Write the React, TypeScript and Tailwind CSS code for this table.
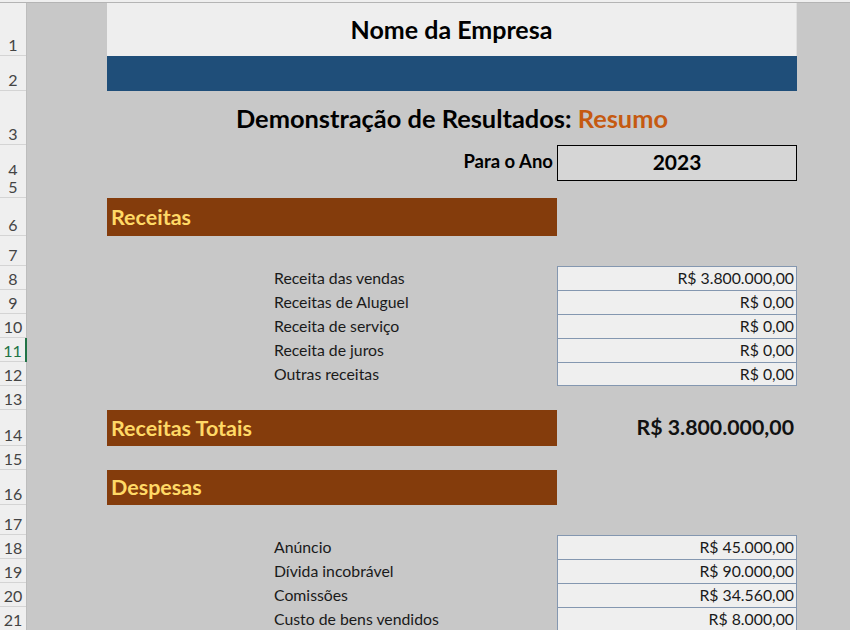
import React from "react"

const font = { fontFamily: "Lato, 'Open Sans', sans-serif" }

type RowProps = {
    n: number
    h: string
    active?: boolean
    children?: React.ReactNode
}

// one spreadsheet row: row header + cells
function Row({ n, h, active, children }: RowProps) {
    return (
        <div className={`grid grid-cols-[27px_80px_163px_287px_240px_1fr] ${h}`}>
            <div
                className={`flex items-end justify-center pb-[3px] bg-[#efefef] shadow-[inset_0_-1px_0_#d4d4d4] text-[16px] leading-none ${
                    active ? "text-[#217346] border-r-2 border-r-[#217346]" : "text-[#444] border-r border-r-[#bdbdbd]"
                }`}
            >
                {n}
            </div>
            {children}
        </div>
    )
}

const receitas = [
    ["Receita das vendas", "R$ 3.800.000,00"],
    ["Receitas de Aluguel", "R$ 0,00"],
    ["Receita de serviço", "R$ 0,00"],
    ["Receita de juros", "R$ 0,00"],
    ["Outras receitas", "R$ 0,00"],
]

const despesas = [
    ["Anúncio", "R$ 45.000,00"],
    ["Dívida incobrável", "R$ 90.000,00"],
    ["Comissões", "R$ 34.560,00"],
    ["Custo de bens vendidos", "R$ 8.000,00"],
]

function ItemRow({ n, label, value, last }: { n: number; label: string; value: string; last?: boolean }) {
    return (
        <Row n={n} h="h-[24px]" active={n === 11}>
            <div />
            <div />
            <div className="flex items-center pl-[4px] text-[15.8px] leading-none text-[#1a1a1a]">{label}</div>
            <div
                className={`flex items-center justify-end pr-[3px] bg-[#efefef] text-[15.8px] leading-none text-[#1a1a1a] ${
                    last
                        ? "shadow-[inset_1px_1px_0_#8497b0,inset_-1px_-1px_0_#8497b0]"
                        : "shadow-[inset_1px_1px_0_#8497b0,inset_-1px_0_0_#8497b0]"
                }`}
            >
                {value}
            </div>
            <div />
        </Row>
    )
}

function SectionBar({ n, h, title }: { n: number; h: string; title: string }) {
    return (
        <Row n={n} h={h}>
            <div />
            <div className="col-span-2 flex items-center pl-[4px] bg-[#843c0c] text-[#ffd966] text-[21.5px] font-bold">
                {title}
            </div>
            <div />
            <div />
        </Row>
    )
}

export default function App() {
    return (
        <div className="w-[850px] h-[630px] overflow-hidden bg-[#c8c8c8]" style={font}>
            <div className="h-[3px] bg-[#efefef] border-b border-[#b4b4b4]" />

            <Row n={1} h="h-[53px]">
                <div />
                <div className="col-span-3 flex items-center justify-center bg-[#eeeeee] border-r border-[#e0e0e0] text-[25px] font-bold text-black">
                    Nome da Empresa
                </div>
                <div />
            </Row>
            <Row n={2} h="h-[35px]">
                <div />
                <div className="col-span-3 bg-[#1f4e79]" />
                <div />
            </Row>
            <Row n={3} h="h-[54px]">
                <div />
                <div className="col-span-3 flex items-center justify-center text-[25.4px] font-bold text-black">
                    Demonstração de Resultados:&nbsp;<span className="text-[#c55a11]">Resumo</span>
                </div>
                <div />
            </Row>
            <Row n={4} h="h-[30px]">
                <div />
                <div className="col-span-2 flex items-center justify-end pr-[4px] pb-[2px] text-[18.5px] font-bold text-black">
                    Para o Ano
                </div>
                <div className="flex items-center justify-center pb-[2px] bg-[#d6d6d6] border border-black text-[21px] font-bold text-black">
                    2023
                </div>
                <div />
            </Row>
            <Row n={5} h="h-[23px]" />
            <SectionBar n={6} h="h-[38px]" title="Receitas" />
            <Row n={7} h="h-[30px]" />
            {receitas.map(([label, value], i) => (
                <ItemRow key={label} n={8 + i} label={label} value={value} last={i === 4} />
            ))}
            <Row n={13} h="h-[24px]" />
            <Row n={14} h="h-[36px]">
                <div />
                <div className="col-span-2 flex items-center pl-[4px] bg-[#843c0c] text-[#ffd966] text-[21.5px] font-bold">
                    Receitas Totais
                </div>
                <div className="flex items-center justify-end pr-[3px] text-[21.3px] font-bold text-[#111]">
                    R$ 3.800.000,00
                </div>
                <div />
            </Row>
            <Row n={15} h="h-[24px]" />
            <SectionBar n={16} h="h-[35px]" title="Despesas" />
            <Row n={17} h="h-[30px]" />
            {despesas.map(([label, value], i) => (
                <ItemRow key={label} n={18 + i} label={label} value={value} last={i === 3} />
            ))}
        </div>
    )
}
